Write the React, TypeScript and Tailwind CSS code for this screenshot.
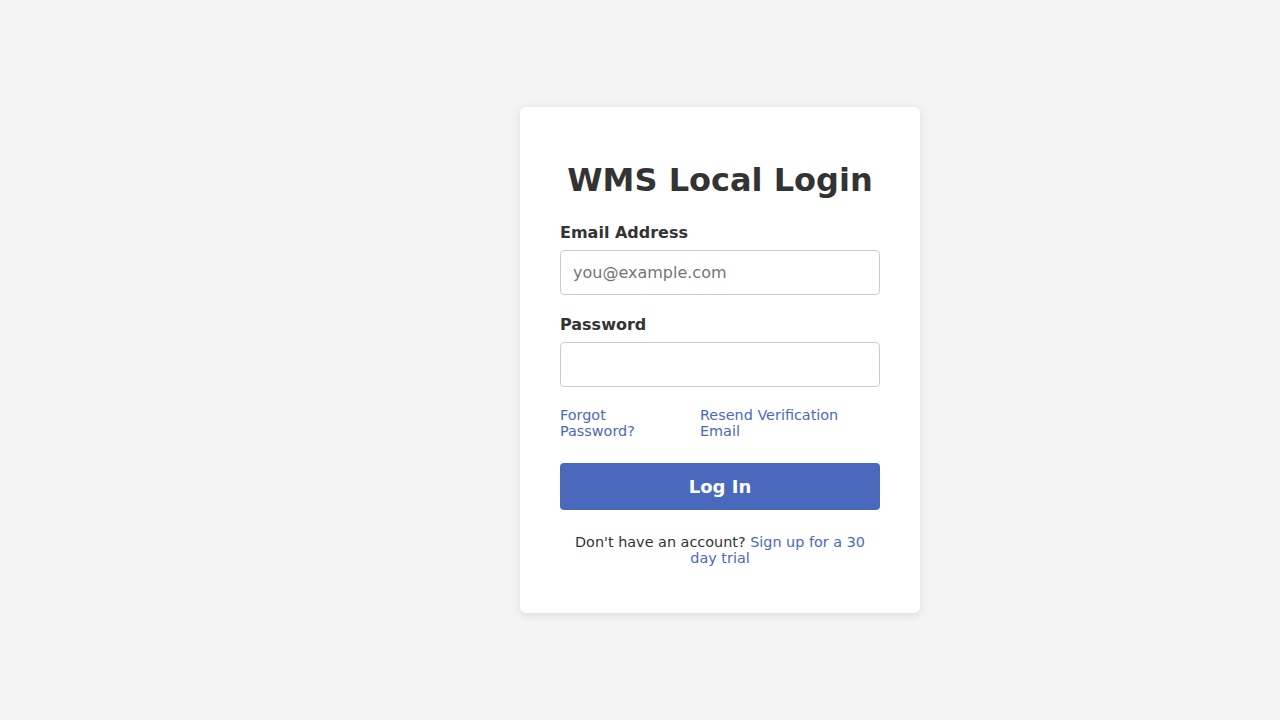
import { useState } from 'react';

const linkClass = 'text-[#4a69bd] hover:underline';

export default function App() {
  const [email, setEmail] = useState('');
  const [password, setPassword] = useState('');

  return (
    <div className="h-screen w-screen overflow-scroll bg-[#f4f4f4] font-['DejaVu_Sans',sans-serif] text-[#333] [&::-webkit-scrollbar]:w-[15px] [&::-webkit-scrollbar]:h-[15px] [&::-webkit-scrollbar]:bg-[#fafafa] [&::-webkit-scrollbar-thumb]:bg-[#8a8a8a] [&::-webkit-scrollbar-thumb]:rounded-full [&::-webkit-scrollbar-thumb]:border-[4px] [&::-webkit-scrollbar-thumb]:border-solid [&::-webkit-scrollbar-thumb]:border-[#fafafa] [&::-webkit-scrollbar-corner]:bg-[#fafafa]">
      <div className="w-[1440px] h-[900px]">
        <div className="h-[720px] flex items-center justify-center">
          <form
            className="w-[400px] bg-white rounded-md shadow-[0_2px_10px_rgba(0,0,0,0.1)] px-10 pt-[55px] pb-[47px]"
            onSubmit={(e) => e.preventDefault()}
          >
            <h1 className="text-[32px] leading-[37px] font-bold text-center mb-6">WMS Local Login</h1>
            <div className="mb-5">
              <label htmlFor="email" className="block font-bold text-base leading-[19px] mb-2">
                Email Address
              </label>
              <input
                id="email"
                type="email"
                placeholder="you@example.com"
                value={email}
                onChange={(e) => setEmail(e.target.value)}
                className="block w-full h-[45px] px-3 text-base border border-[#ccc] rounded placeholder:text-[#757575] outline-none"
              />
            </div>
            <div className="mb-5">
              <label htmlFor="password" className="block font-bold text-base leading-[19px] mb-2">
                Password
              </label>
              <input
                id="password"
                type="password"
                value={password}
                onChange={(e) => setPassword(e.target.value)}
                className="block w-full h-[45px] px-3 text-base border border-[#ccc] rounded outline-none"
              />
            </div>
            <div className="flex text-[14.4px] leading-4 mb-[24px]">
              <a href="#" className={`w-[140px] pr-4 ${linkClass}`}>
                Forgot Password?
              </a>
              <a href="#" className={`w-[180px] pr-6 ${linkClass}`}>
                Resend Verification Email
              </a>
            </div>
            <button
              type="submit"
              className="block w-full h-[47px] rounded bg-[#4a69bd] text-white text-lg font-bold"
            >
              Log In
            </button>
            <p className="mt-6 text-[14.4px] leading-4 text-center">
              Don't have an account?{' '}
              <a href="#" className={linkClass}>
                Sign up for a 30 day trial
              </a>
            </p>
          </form>
        </div>
      </div>
    </div>
  );
}
